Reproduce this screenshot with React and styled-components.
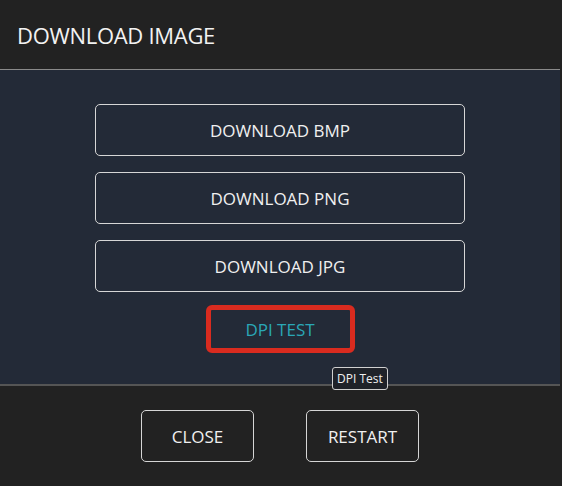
import React from "react";
import styled, { createGlobalStyle } from "styled-components";

const GlobalStyle = createGlobalStyle`
  html, body {
    margin: 0;
    padding: 0;
    background: #222222;
    font-family: "Open Sans", "Noto Sans", sans-serif;
  }
`;

const Dialog = styled.div`
  position: relative;
  width: 560px;
  height: 486px;
  background: #222222;
  display: flex;
  flex-direction: column;
`;

const Header = styled.div`
  height: 70px;
  box-sizing: border-box;
  padding: 0 0 0 17px;
  display: flex;
  align-items: center;
  border-bottom: 1px solid #8a8a8a;
  color: #f2f2f2;
  font-size: 22px;
  letter-spacing: -0.3px;
`;

const Body = styled.div`
  background: #232a37;
  padding: 34px 0 31px;
  display: flex;
  flex-direction: column;
  align-items: center;
`;

const Stack = styled.div`
  display: flex;
  flex-direction: column;
  gap: 16px;
`;

const OutlineButton = styled.button`
  box-sizing: border-box;
  width: ${(p) => p.$w}px;
  height: 52px;
  background: transparent;
  border: 1px solid #d6d6d6;
  border-radius: 5px;
  color: #f0f0f0;
  font-family: inherit;
  font-size: 17px;
  cursor: pointer;
`;

const DpiButton = styled.button`
  box-sizing: border-box;
  margin-top: 13px;
  width: 149px;
  height: 48px;
  background: transparent;
  border: 5px solid #d92b1f;
  border-radius: 6px;
  color: #2aa7b6;
  font-family: inherit;
  font-size: 17px;
  cursor: pointer;
`;

const Footer = styled.div`
  flex: 1;
  border-top: 2px solid #555555;
  padding-top: 24px;
  display: flex;
  justify-content: center;
  gap: 52px;
`;

const Tooltip = styled.div`
  position: absolute;
  left: 332px;
  top: 367px;
  box-sizing: border-box;
  height: 23px;
  padding: 0 4px;
  display: flex;
  align-items: center;
  background: #1f2229;
  border: 1px solid #d0d0d0;
  border-radius: 3px;
  color: #f0f0f0;
  font-size: 12px;
`;

export default function App() {
  return (
    <>
      <GlobalStyle />
      <Dialog>
        <Header>DOWNLOAD IMAGE</Header>
        <Body>
          <Stack>
            <OutlineButton $w={370}>DOWNLOAD BMP</OutlineButton>
            <OutlineButton $w={370}>DOWNLOAD PNG</OutlineButton>
            <OutlineButton $w={370}>DOWNLOAD JPG</OutlineButton>
          </Stack>
          <DpiButton>DPI TEST</DpiButton>
        </Body>
        <Footer>
          <OutlineButton $w={113}>CLOSE</OutlineButton>
          <OutlineButton $w={113}>RESTART</OutlineButton>
        </Footer>
        <Tooltip>DPI Test</Tooltip>
      </Dialog>
    </>
  );
}
